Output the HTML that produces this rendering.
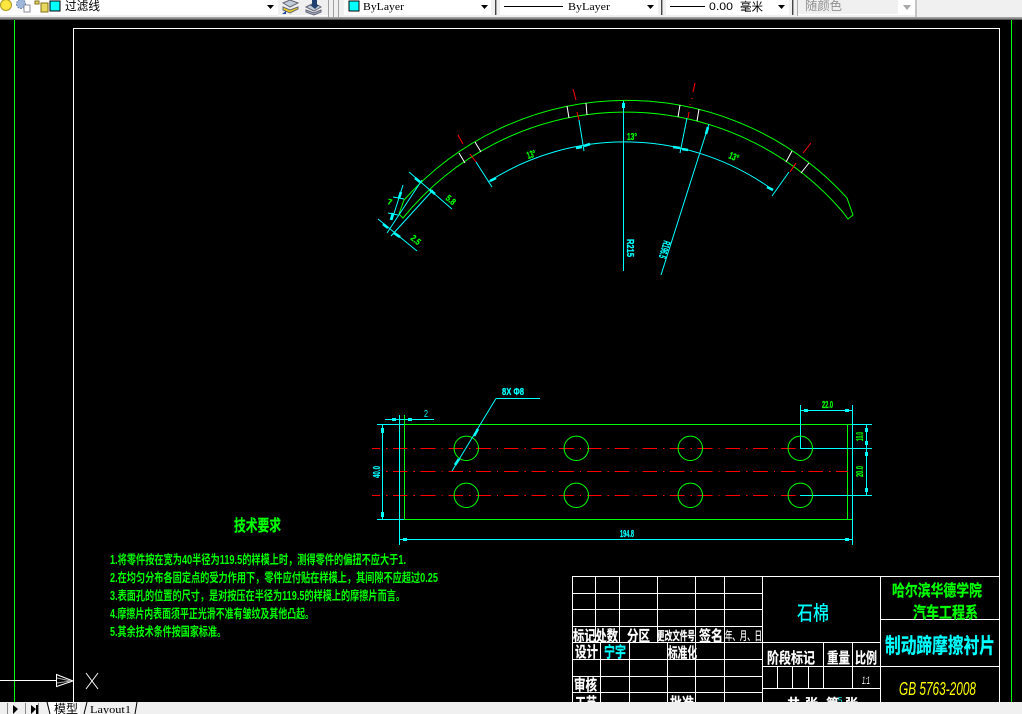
<!DOCTYPE html>
<html lang="zh">
<head>
<meta charset="utf-8">
<title>CAD</title>
<style>
html,body{margin:0;padding:0;background:#000;width:1022px;height:714px;overflow:hidden}
svg{display:block}
text{font-family:"Liberation Sans","Noto Sans CJK SC",sans-serif}
.s{font-family:"Liberation Serif","Noto Sans CJK SC",serif}
.c{fill:none;stroke:#0ff;stroke-width:1}
.g{fill:none;stroke:#0f0;stroke-width:1}
.w{fill:none;stroke:#fff;stroke-width:1}
.r{fill:none;stroke:#f00;stroke-width:1}
.tw{fill:#fff;font-weight:700;stroke:#fff;stroke-width:.2}
.tg{fill:#0f0;font-weight:700;stroke:#0f0;stroke-width:.25}
.tc{fill:#0ff;font-weight:700;stroke:#0ff;stroke-width:.25}
.d{fill:none;stroke:#f00;stroke-width:1;stroke-dasharray:14.7 6 1.3 5.7;stroke-dashoffset:6.7}
.a{fill:none;stroke:#0ff;stroke-width:2.6}
</style>
</head>
<body>
<svg width="1022" height="714" viewBox="0 0 1022 714" xmlns="http://www.w3.org/2000/svg">
<rect width="1022" height="714" fill="#000"/>

<g shape-rendering="crispEdges">
<path class="g" d="M14.5 20V702M1011.5 20V702"/>
<path class="w" d="M73.500 702V28.500H999.500V702"/>

<!-- title block -->
<path class="w" d="M572.500 702V576.500H999M572.500 593.500H762M572.500 609.500H762M572.500 626.500H762M572.500 642.500H880M572.500 659.500H762M572.500 676.500H762M572.500 692.500H762"/>
<path class="w" d="M595.500 576V642M619.500 576V642M657.500 576V642M695.500 576V702M724.500 576V702M762.500 576V702"/>
<path class="w" d="M600.500 642V702M629.500 642V702M667.500 642V702"/>
<path class="w" d="M880.500 576V702M880 619.500H999M762 666.500H999M762 688.500H880M823.500 642V688M852.500 642V688M777.500 666V688M792.500 666V688M808.500 666V688"/>

<!-- bottom view lines -->
<path class="g" d="M404 424.500H852.500M404 519.500H852.500M404.500 415V519.500M847.500 424V519"/>
<path class="d" d="M372 448.500H848"/>
<path class="d" style="stroke-dashoffset:20.7" d="M386 471.500H848"/>
<path class="d" d="M372 495.500H848"/>
<path class="c" d="M377 424.500H404M377 519.500H404M399.500 415V545M852.500 405V545M399 539.500H852M382.500 424V519M385 419.500H434M852 424.500H872M800.500 405V448M800 448.500H872M800 495.500H872M866.500 424V495M800 410.500H852M496 398.500H540"/>

<g fill="#0ff">
<rect x="403" y="538" width="4" height="3"/><rect x="845" y="538" width="4" height="3"/>
<rect x="381" y="428" width="3" height="5"/><rect x="381" y="512" width="3" height="5"/>
<rect x="392" y="418" width="4" height="3"/><rect x="408" y="418" width="4" height="3"/>
<rect x="804" y="409" width="4" height="3"/><rect x="845" y="409" width="4" height="3"/>
<rect x="865" y="428" width="3" height="4"/><rect x="865" y="441" width="3" height="4"/>
<rect x="865" y="452" width="3" height="4"/><rect x="865" y="488" width="3" height="4"/>
<rect x="622" y="103" width="3" height="5"/>
</g>
</g>

<!-- circles -->
<g fill="none" stroke="#0f0">
<circle cx="466.300" cy="448.300" r="12.200"/><circle cx="576.300" cy="448.300" r="12.200"/><circle cx="690.300" cy="448.300" r="12.200"/><circle cx="800.300" cy="448.300" r="12.200"/>
<circle cx="466.300" cy="495.300" r="12.200"/><circle cx="576.300" cy="495.300" r="12.200"/><circle cx="690.300" cy="495.300" r="12.200"/><circle cx="800.300" cy="495.300" r="12.200"/>
</g>
<path class="c" d="M496 398.500L452 471"/>
<path class="a" d="M478 429L474 436M459 459L455 465"/>

<!-- friction lining arc -->
<path class="g" d="M404 200A298 298 0 0 1 847 198L853 215L848 219L842 211A286.500 286.500 0 0 0 403 218L399 214Z"/>
<path class="w" d="M459 153L465 163M475 142L481 152M567 106L569 118M586 103L587 115M680 105L678 117M699 109L697 121M792 151L786 162M809 163L801 173"/>
<path class="r" d="M458 135L463 144M470 154L476 162M573 89L576 100M577 112L579 120M695 83L693 92M692 98V99M690 104V105M689 112L688 118M811 143L803 153M796 163L790 172"/>
<path class="c" d="M488 182A253 253 0 0 1 773 190"/>
<path class="c" d="M476 162L492 187M579 120L584 151M687 118L680 153M709 124L661 275M623.500 101V271M789 172L772 196M409 172L452 209M378 219L417 251M403 185L392 220M393 197L404 199M388 213L398 215M422 180L387 233M433 190L391 236"/>
<path class="a" d="M490 181L496 178M576 148L582 147M584 146L590 144M673 147L680 148M682 149L688 150M767 187L773 190M708 127L706 134M415 178L420 182M430 190L435 194M383 224L388 228M394 233L400 237M401 192L399 198M393 213L391 220"/>

<!-- dimension text -->
<text x="627" y="140" font-size="10" class="tg" textLength="10" lengthAdjust="spacingAndGlyphs">13°</text>
<text transform="translate(528 159) rotate(-18)" font-size="10" class="tg" textLength="9" lengthAdjust="spacingAndGlyphs">13°</text>
<text transform="translate(728 158) rotate(22)" font-size="10" class="tg" textLength="10" lengthAdjust="spacingAndGlyphs">13°</text>
<text transform="translate(627 239) rotate(90)" font-size="10" class="tc" textLength="18" lengthAdjust="spacingAndGlyphs">R215</text>
<text transform="translate(664 240) rotate(107)" font-size="10" class="tc" textLength="18" lengthAdjust="spacingAndGlyphs">R196.5</text>
<text transform="translate(445 199) rotate(40)" font-size="9" class="tg" textLength="10" lengthAdjust="spacingAndGlyphs">5.8</text>
<text transform="translate(410 239) rotate(40)" font-size="9" class="tg" textLength="10" lengthAdjust="spacingAndGlyphs">2.5</text>
<text transform="translate(387 204) rotate(15)" font-size="8" class="tg">7</text>
<text x="502" y="395" font-size="10" class="tc" textLength="22" lengthAdjust="spacingAndGlyphs">8X Φ8</text>
<text x="424" y="417" font-size="10" fill="#0ff" textLength="4" lengthAdjust="spacingAndGlyphs">2</text>
<text transform="translate(380 478) rotate(-90)" font-size="10" class="tc" textLength="12" lengthAdjust="spacingAndGlyphs">40.0</text>
<text x="620" y="537" font-size="10" class="tc" textLength="14" lengthAdjust="spacingAndGlyphs">194.8</text>
<text x="822" y="408" font-size="10" class="tg" textLength="11" lengthAdjust="spacingAndGlyphs">22.0</text>
<text transform="translate(863 441) rotate(-90)" font-size="10" class="tg" textLength="9" lengthAdjust="spacingAndGlyphs">10.0</text>
<text transform="translate(863 477) rotate(-90)" font-size="10" class="tg" textLength="11" lengthAdjust="spacingAndGlyphs">20.0</text>

<!-- technical requirements -->
<text x="234" y="531" font-size="16" class="tg" textLength="47" lengthAdjust="spacingAndGlyphs">技术要求</text>
<g font-size="12.500" fill="#0f0" font-weight="700">
<text x="110" y="564" textLength="296" lengthAdjust="spacingAndGlyphs">1.将零件按在宽为40半径为119.5的样模上时，测得零件的偏扭不应大于1.</text>
<text x="110" y="582" textLength="328" lengthAdjust="spacingAndGlyphs">2.在均匀分布各固定点的受力作用下，零件应付贴在样模上，其间隙不应超过0.25</text>
<text x="110" y="600" textLength="295" lengthAdjust="spacingAndGlyphs">3.表面孔的位置的尺寸，是对按压在半径为119.5的样模上的摩擦片而言。</text>
<text x="110" y="618" textLength="204" lengthAdjust="spacingAndGlyphs">4.摩擦片内表面须平正光滑不准有皱纹及其他凸起。</text>
<text x="110" y="636" textLength="116" lengthAdjust="spacingAndGlyphs">5.其余技术条件按国家标准。</text>
</g>

<!-- title block text -->
<g font-size="15" class="tw">
<text x="573" y="641" textLength="45" lengthAdjust="spacingAndGlyphs">标记处数</text>
<text x="627" y="641" textLength="23" lengthAdjust="spacingAndGlyphs">分区</text>
<text x="657" y="640" font-size="12" textLength="38" lengthAdjust="spacingAndGlyphs">更改文件号</text>
<text x="699" y="641" textLength="24" lengthAdjust="spacingAndGlyphs">签名</text>
<text x="725" y="640" font-size="12" font-weight="400" textLength="37" lengthAdjust="spacingAndGlyphs">年、月、日</text>
<text x="575" y="657" textLength="23" lengthAdjust="spacingAndGlyphs">设计</text>
<text x="668" y="658" textLength="29" lengthAdjust="spacingAndGlyphs">标准化</text>
<text x="574" y="690" textLength="23" lengthAdjust="spacingAndGlyphs">审核</text>
<text x="575" y="708" textLength="22" lengthAdjust="spacingAndGlyphs">工艺</text>
<text x="670" y="708" textLength="24" lengthAdjust="spacingAndGlyphs">批准</text>
<text x="767" y="663" textLength="48" lengthAdjust="spacingAndGlyphs">阶段标记</text>
<text x="827" y="663" textLength="23" lengthAdjust="spacingAndGlyphs">重量</text>
<text x="855" y="663" textLength="22" lengthAdjust="spacingAndGlyphs">比例</text>
<text x="787" y="708" font-size="13">共</text>
<text x="805" y="708" font-size="13">张</text>
<text x="826" y="708" font-size="13">第</text>
<text x="845" y="708" font-size="13">张</text>
</g>
<text x="838" y="703" font-size="8" fill="#0ff">5</text>
<text x="604" y="657" font-size="15" class="tc" textLength="22" lengthAdjust="spacingAndGlyphs">宁宇</text>
<text x="797" y="620" font-size="20" fill="#0ff" font-weight="500" textLength="32" lengthAdjust="spacingAndGlyphs">石棉</text>
<text x="892" y="596" font-size="16" class="tg" textLength="90" lengthAdjust="spacingAndGlyphs">哈尔滨华德学院</text>
<text x="913" y="618" font-size="16" class="tg" textLength="65" lengthAdjust="spacingAndGlyphs">汽车工程系</text>
<text x="885" y="653" font-size="21" class="tc" textLength="110" lengthAdjust="spacingAndGlyphs">制动蹄摩擦衬片</text>
<text x="862" y="684" font-size="11" fill="#fff" font-style="italic" textLength="8" lengthAdjust="spacingAndGlyphs">1:1</text>
<text x="899" y="695" font-size="18" fill="#ff0" font-style="italic" textLength="77" lengthAdjust="spacingAndGlyphs">GB 5763-2008</text>

<!-- UCS icon -->
<path class="w" d="M0 680.500H56M56.500 674.500L73 681L56.500 686.500Z"/>
<path d="M57 678L71 681M57 683L71 681" stroke="#aaa" fill="none"/>
<path class="w" d="M86 673L98 689M98 673L86 689"/>

<!-- top toolbar -->
<g shape-rendering="crispEdges">
<rect x="0" y="0" width="1022" height="17" fill="#f0f0f0"/>
<rect x="0" y="17" width="1022" height="1" fill="#a0a0a0"/>
<rect x="0" y="18" width="1022" height="1" fill="#8c8c8c"/>
<rect x="0" y="19" width="1022" height="1" fill="#555"/>
<rect x="0" y="0" width="278" height="15" fill="#fff"/>
<rect x="278" y="15" width="50" height="1" fill="#fff"/>
<rect x="328" y="0" width="1" height="17" fill="#a0a0a0"/>
<rect x="333" y="0" width="1" height="17" fill="#a0a0a0"/>
<rect x="338" y="0" width="1" height="17" fill="#a0a0a0"/>
<rect x="344" y="0" width="147" height="15" fill="#fff"/>
<rect x="495" y="0" width="1" height="15" fill="#444"/>
<rect x="496" y="0" width="1" height="15" fill="#aaa"/>
<rect x="500" y="0" width="158" height="15" fill="#fff"/>
<rect x="661" y="0" width="1" height="15" fill="#444"/>
<rect x="662" y="0" width="1" height="15" fill="#aaa"/>
<rect x="666" y="0" width="123" height="15" fill="#fff"/>
<rect x="792" y="0" width="1" height="15" fill="#444"/>
<rect x="793" y="0" width="1" height="15" fill="#aaa"/>
<rect x="797" y="0" width="1" height="16" fill="#aaa"/>
<rect x="798" y="0" width="117" height="15" fill="#fff"/>
<rect x="798" y="0" width="100" height="14" fill="#f0f0f0"/>
<rect x="915" y="0" width="2" height="17" fill="#c4c4c4"/>
<rect x="50" y="1" width="10" height="10" fill="#0ff" stroke="#000"/>
<rect x="349" y="1" width="10" height="10" fill="#0ff" stroke="#000"/>
<path d="M504 6.500H563M670 6.500H705" stroke="#000" fill="none"/>
</g>
<circle cx="6" cy="5" r="5.500" fill="#ffe640" stroke="#a89a20"/>
<circle cx="21" cy="4" r="4.500" fill="#9db8dc" stroke="#7088aa" stroke-dasharray="2 1"/>
<rect x="24" y="5" width="6" height="7" fill="#fff" stroke="#889"/>
<path d="M35 1h4v3h-4zM41 3h7v9h-7z" fill="#e8d860" stroke="#807018"/>
<path d="M283 3l7-3 8 3-8 4z" fill="#c0ccd8" stroke="#667"/>
<path d="M283 7l7 3 8-3v2l-8 4-7-3z" fill="#e8d020" stroke="#667"/>
<path d="M282 14l4-3v3z" fill="#2040a0"/>
<path d="M306 7l8-4 7 4-7 4z" fill="#c0ccd8" stroke="#667"/>
<path d="M306 10l8 3 7-3v2l-7 3-8-3z" fill="#a8b4c4" stroke="#667"/>
<path d="M312 0h5v5h2l-4 4-5-4h2z" fill="#204070"/>
<path d="M267 5h7l-3.500 4zM481 5h7l-3.500 4zM647 5h7l-3.500 4zM778 5h7l-3.500 4z" fill="#000"/>
<path d="M903 5h8l-4 5z" fill="#a8a8a8"/>
<text x="65" y="10" font-size="12" fill="#000" textLength="35" lengthAdjust="spacingAndGlyphs">过滤线</text>
<text x="363" y="10" font-size="10" class="s" fill="#000" textLength="41" lengthAdjust="spacingAndGlyphs">ByLayer</text>
<text x="568" y="10" font-size="10" class="s" fill="#000" textLength="42" lengthAdjust="spacingAndGlyphs">ByLayer</text>
<text x="709" y="10" font-size="11" fill="#000" textLength="24" lengthAdjust="spacingAndGlyphs">0.00</text>
<text x="740" y="11" font-size="12" fill="#000" textLength="23" lengthAdjust="spacingAndGlyphs">毫米</text>
<text x="805" y="10" font-size="12" fill="#909090" textLength="37" lengthAdjust="spacingAndGlyphs">随颜色</text>

<!-- bottom tabs -->
<g shape-rendering="crispEdges">
<rect x="0" y="702" width="1022" height="12" fill="#f0f0f0"/>
<rect x="7" y="703" width="1" height="11" fill="#888"/>
<rect x="25" y="703" width="1" height="11" fill="#888"/>
<rect x="38" y="703" width="1" height="11" fill="#888"/>
<rect x="49" y="702" width="31" height="12" fill="#fff"/>
</g>
<path d="M13 705l5 4-5 5zM31 705l5 4-5 5zM36 705h2v9h-2z" fill="#000"/>
<path d="M47 702l3 12M84 714l3-12M137 702l-2 12" stroke="#000" fill="none"/>
<text x="54" y="713" font-size="12" fill="#000" textLength="24" lengthAdjust="spacingAndGlyphs">模型</text>
<text x="90" y="713" font-size="11" class="s" fill="#000" textLength="41" lengthAdjust="spacingAndGlyphs">Layout1</text>
</svg>
</body>
</html>
